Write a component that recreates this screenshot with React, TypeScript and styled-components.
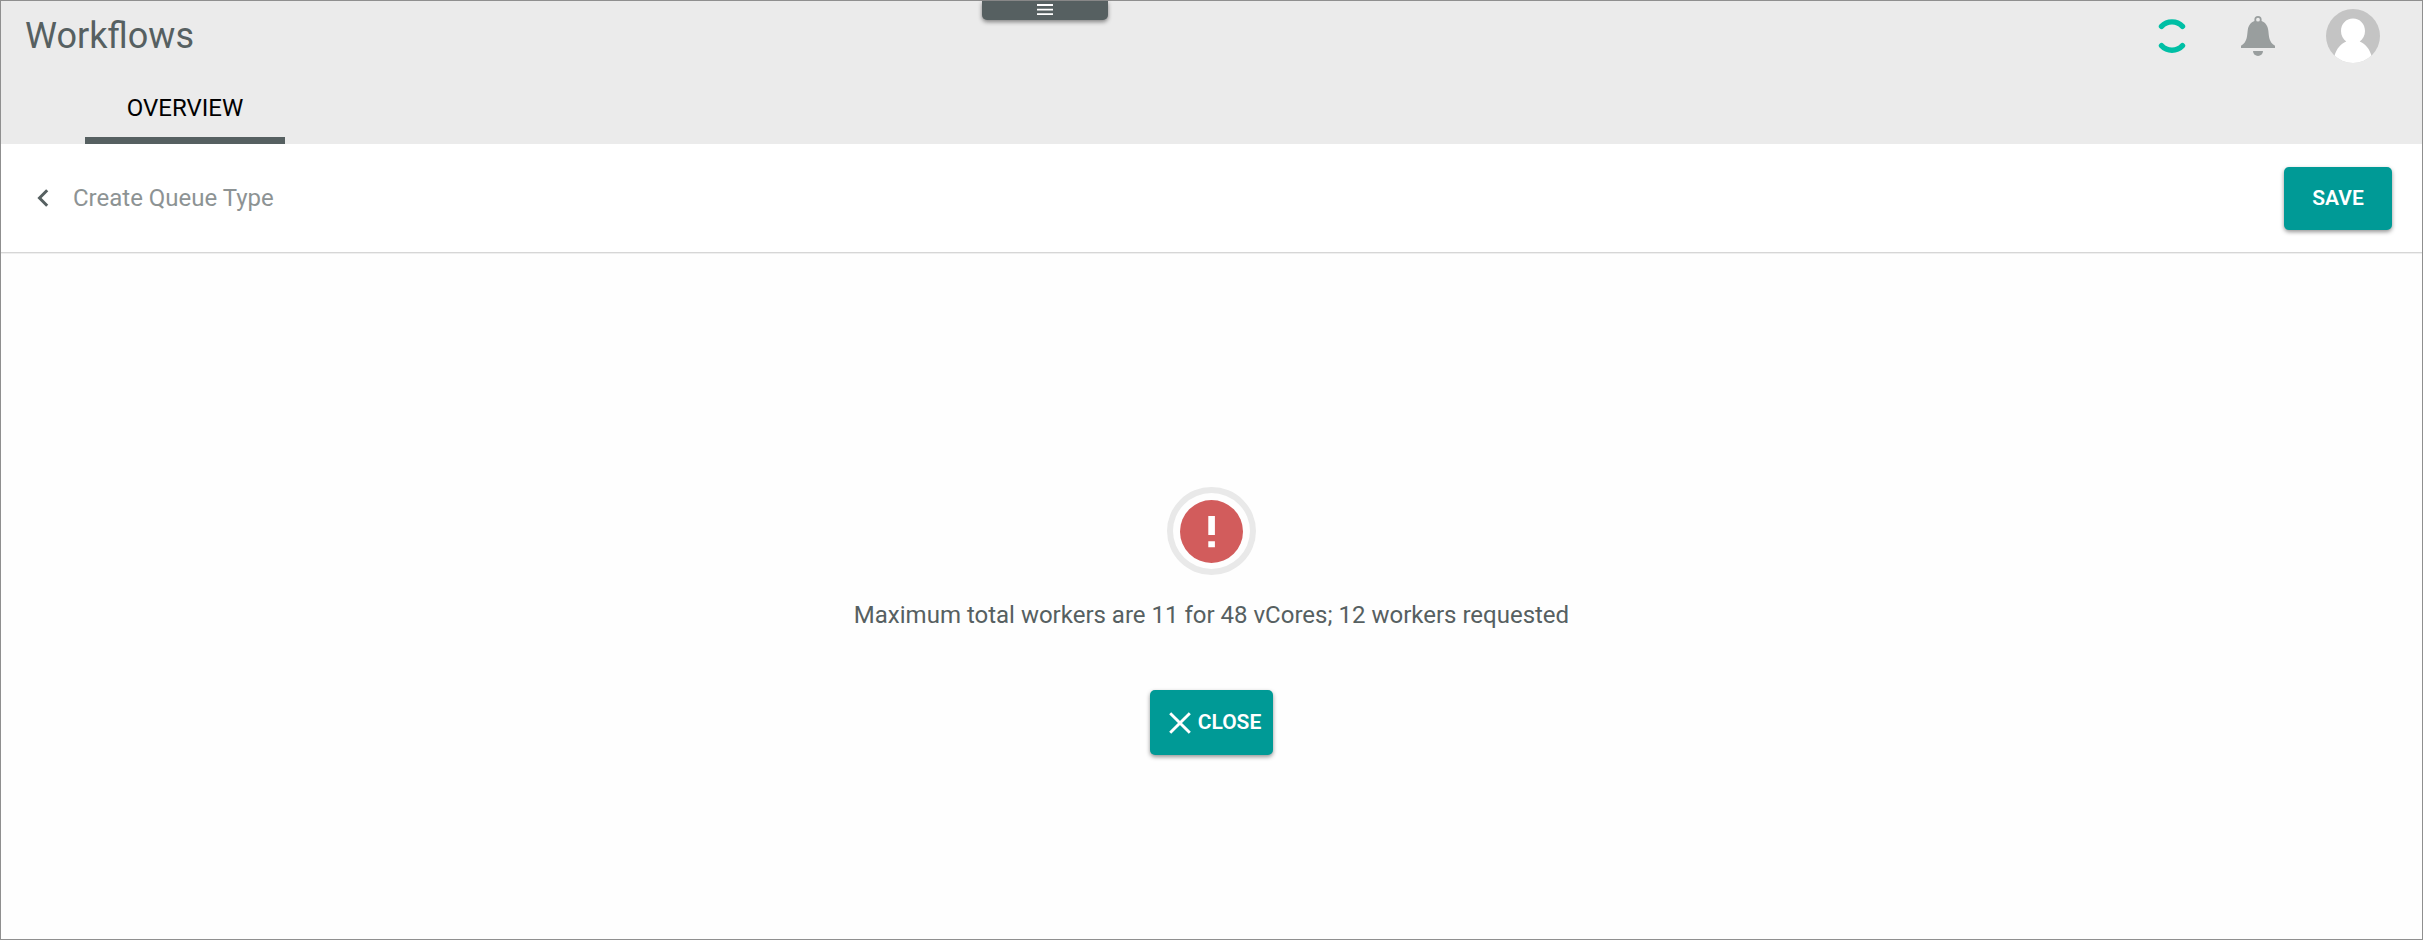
import React from "react";
import styled, { createGlobalStyle } from "styled-components";

const GlobalStyle = createGlobalStyle`
  *, *::before, *::after { box-sizing: border-box; }
  body { margin: 0; font-family: Roboto, "Liberation Sans", sans-serif; }
  svg { display: block; flex: none; }
`;

const Page = styled.div`
  position: relative;
  display: flex;
  flex-direction: column;
  height: 940px;
  border: 1px solid #8f8f8f;
  background: #fefefe;
  color: #566061;
`;

const Header = styled.header`
  display: flex;
  flex-direction: column;
  height: 143px;
  background: #ebebeb;
`;

const TopRow = styled.div`
  display: flex;
  align-items: center;
  justify-content: space-between;
  height: 70px;
  padding: 0 42px 0 24px;
`;

const Title = styled.h1`
  margin: 0;
  font-size: 36px;
  line-height: 42px;
  font-weight: 400;
`;

const Actions = styled.div`
  display: flex;
  align-items: center;
`;

const BellSlot = styled.div`
  margin: 0 51px 0 55px;
`;

const MenuHandle = styled.button`
  position: absolute;
  top: 0;
  left: 981px;
  display: flex;
  justify-content: center;
  width: 126px;
  height: 19px;
  padding: 3px 0 0;
  border: 0;
  border-radius: 0 0 5px 5px;
  background: #566061;
  box-shadow: 0 2px 4px rgba(0, 0, 0, 0.45);
`;

const Tabs = styled.nav`
  display: flex;
  height: 73px;
  padding-left: 84px;
`;

const Tab = styled.a`
  width: 200px;
  height: 73px;
  padding-top: 23px;
  border-bottom: 7px solid #566061;
  color: #000;
  font-size: 24px;
  line-height: 28px;
  text-align: center;
`;

const Toolbar = styled.div`
  display: flex;
  align-items: center;
  height: 109px;
  padding: 0 30px 0 36px;
  border-bottom: 1px solid #d6d6d6;
  background: #fff;
  box-shadow: 0 1px 0 #efefef;
`;

const Crumb = styled.span`
  margin-left: 24px;
  flex: 1;
  color: #8d9394;
  font-size: 24px;
  line-height: 28px;
`;

const Button = styled.button<{ $width: number; $height: number }>`
  display: flex;
  align-items: center;
  justify-content: center;
  width: ${(p) => p.$width}px;
  height: ${(p) => p.$height}px;
  padding: 0;
  border: 0;
  border-radius: 5px;
  background: #009a96;
  color: #fff;
  font-family: inherit;
  font-size: 21px;
  font-weight: 600;
  line-height: 25px;
  box-shadow: 0 2px 4px rgba(0, 0, 0, 0.42);
`;

const SaveButton = styled(Button)`
  margin-top: 1px;
`;

const CloseButton = styled(Button)`
  padding-left: 7px;
`;

const CloseLabel = styled.span`
  margin-left: 7px;
`;

const Content = styled.main`
  display: flex;
  flex-direction: column;
  align-items: center;
  padding-top: 234px;
`;

const AlertRing = styled.div`
  display: flex;
  align-items: center;
  justify-content: center;
  width: 89px;
  height: 88px;
  border: 6px solid #e9e9e9;
  border-radius: 50%;
`;

const Message = styled.p`
  margin: 26px 0 61px;
  font-size: 24px;
  line-height: 28px;
`;

const Spinner = () => (
  <svg width="28" height="36" viewBox="0 0 28 36" fill="none" stroke="#00bfa5" strokeWidth="5.4" strokeLinecap="round">
    <path d="M3.5 8.4C9.2 2.3 18.8 2.3 24.5 8.4" />
    <path d="M3.5 27.6C9.2 33.7 18.8 33.7 24.5 27.6" />
  </svg>
);

const Bell = () => (
  <svg width="34" height="40" viewBox="0 0 34 40" fill="#999e9e">
    <path
      fillRule="evenodd"
      d="M17 0a3.6 3.6 0 0 0-3.6 3.6V5C9.2 6.5 7.3 10 6.7 14.5C5.9 20.5 6.3 26 0 29.8V32H34V29.8C27.7 26 28.1 20.5 27.3 14.5C26.7 10 24.8 6.5 20.6 5V3.6A3.6 3.6 0 0 0 17 0ZM17 1.8a1.9 1.9 0 1 1 0 3.8a1.9 1.9 0 0 1 0-3.8Z"
    />
    <path d="M12 35h10a5 5 0 0 1-10 0Z" />
  </svg>
);

const Avatar = () => (
  <svg width="54" height="54" viewBox="0 0 54 54">
    <clipPath id="avatar">
      <circle cx="27" cy="27" r="27" />
    </clipPath>
    <g clipPath="url(#avatar)">
      <rect width="54" height="54" fill="#c4c4c4" />
      <path
        fill="#fff"
        d="M27 9.5C20 9.5 15 15 15 22C15 26.5 17 30 20.3 32.5C14.5 35 10.5 40 8.5 46.5V54H45.5V46.5C43.5 40 39.5 35 33.7 32.5C37 30 39 26.5 39 22C39 15 34 9.5 27 9.5Z"
      />
    </g>
  </svg>
);

const App = () => (
  <>
    <GlobalStyle />
    <Page>
      <Header>
        <TopRow>
          <Title>Workflows</Title>
          <Actions>
            <Spinner />
            <BellSlot>
              <Bell />
            </BellSlot>
            <Avatar />
          </Actions>
        </TopRow>
        <Tabs>
          <Tab>OVERVIEW</Tab>
        </Tabs>
        <MenuHandle aria-label="Menu">
          <svg width="16" height="12" viewBox="0 0 16 12" fill="#fff">
            <path d="M0 .1h16v1.8H0zM0 4.8h16v1.8H0zM0 9.3h16v1.8H0z" />
          </svg>
        </MenuHandle>
      </Header>
      <Toolbar>
        <svg width="12" height="18" viewBox="0 0 12 18" fill="none" stroke="#566061" strokeWidth="3">
          <path d="M10.2 1.2L2.5 9L10.2 16.8" />
        </svg>
        <Crumb>Create Queue Type</Crumb>
        <SaveButton $width={108} $height={63}>SAVE</SaveButton>
      </Toolbar>
      <Content>
        <AlertRing>
          <svg width="63" height="63" viewBox="0 0 63 63">
            <circle cx="31.5" cy="31.5" r="31.5" fill="#d25c5c" />
            <path fill="#fff" d="M28.3 16h6.6v19h-6.6zM28.3 41.2h6.6v6h-6.6z" />
          </svg>
        </AlertRing>
        <Message>Maximum total workers are 11 for 48 vCores; 12 workers requested</Message>
        <CloseButton $width={123} $height={65}>
          <svg width="22" height="22" viewBox="0 0 22 22" stroke="#fff" strokeWidth="2.9">
            <path d="M1.2 1.2L20.8 20.8M20.8 1.2L1.2 20.8" />
          </svg>
          <CloseLabel>CLOSE</CloseLabel>
        </CloseButton>
      </Content>
    </Page>
  </>
);

export default App;
